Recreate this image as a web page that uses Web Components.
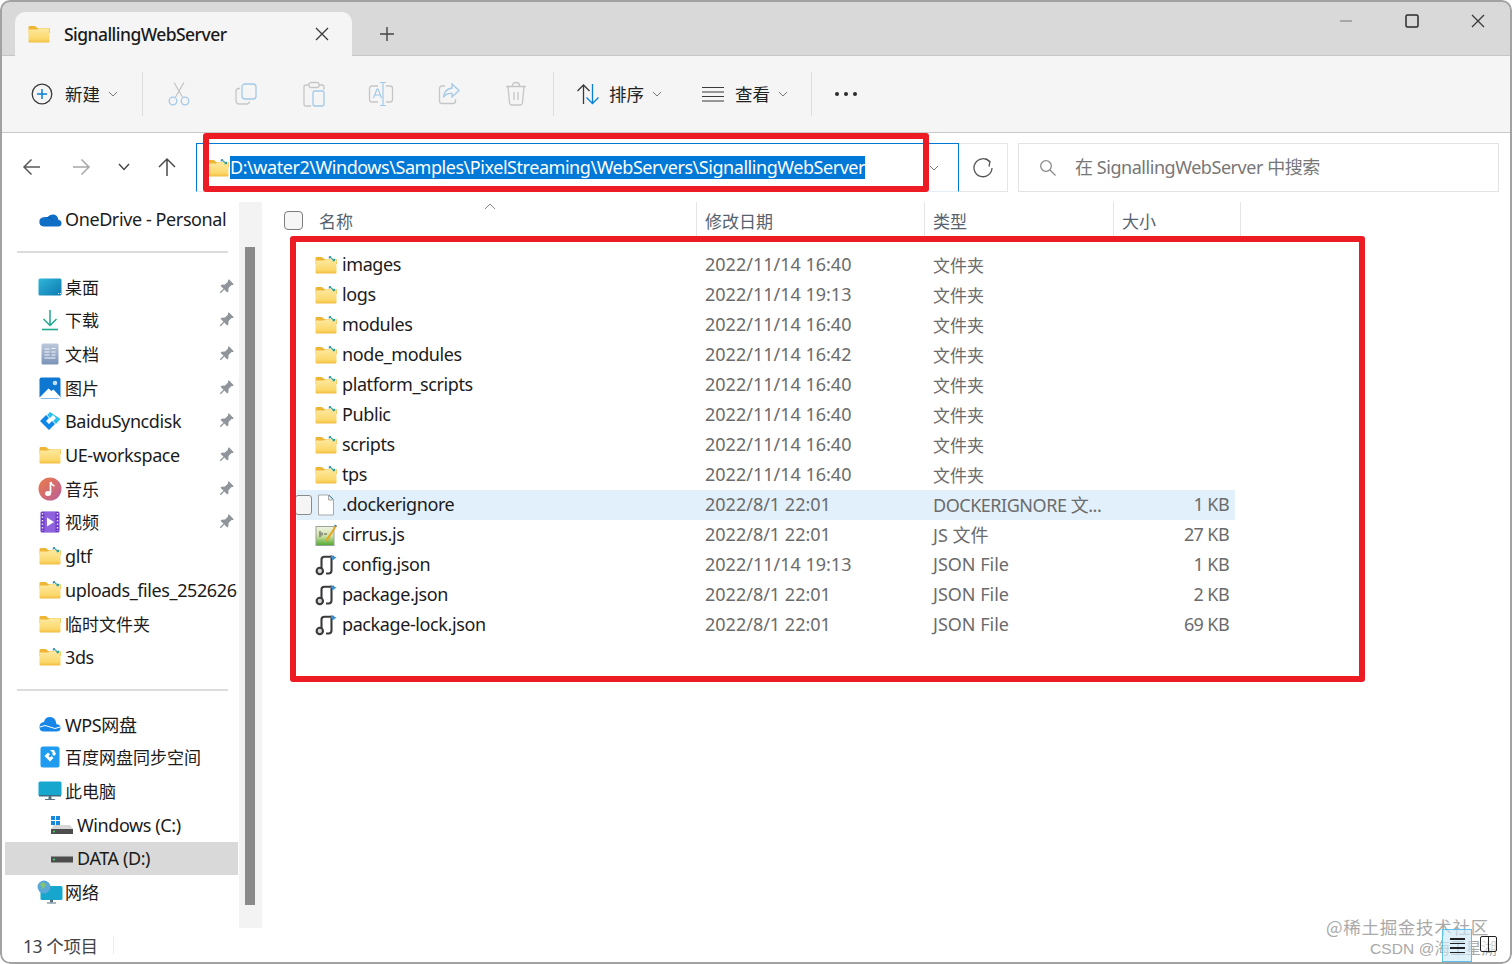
<!DOCTYPE html>
<html lang="zh-CN"><head><meta charset="utf-8"><title>SignallingWebServer</title>
<style>
html,body{margin:0;padding:0;background:#fff;width:1512px;height:964px;overflow:hidden}
body{font-family:"Noto Sans","Noto Sans CJK SC",sans-serif;font-size:18px;color:#1b1b1b;letter-spacing:-.4px}
</style></head><body>
<script>
const folderBase=(mark)=>`<svg viewBox="0 0 22 18" width="22" height="18"><defs><linearGradient id="f" x1="0" y1="0" x2="0" y2="1"><stop offset="0" stop-color="#fde9a0"/><stop offset=".75" stop-color="#fbd86c"/><stop offset="1" stop-color="#f2bc3c"/></linearGradient></defs><path d="M0.5 2.2q0-1.2 1.2-1.2h5.2l2.4 2h11.5q1.2 0 1.2 1.2V8H.5z" fill="#efb534"/><path d="M.5 4.4h8.3l2-1.2h9.7q1 0 1 1v12.4q0 1-1 1H1.5q-1 0-1-1z" fill="url(#f)"/>${mark?'<path d="M14.6.6l5 4.2M19.6 4.8l-.2-2M19.6 4.8l-2-.1" stroke="#1d9c9c" stroke-width="1.1" fill="none"/><path d="M16 .7l-1.8.1.1 1.8" stroke="#2b7fb0" stroke-width="1" fill="none"/>':''}</svg>`;
const jsonIcon=`<svg viewBox="0 0 22 22" width="22" height="22"><path d="M6.500 14V5.500Q6.500 2.800 9.500 2.800H19" fill="none" stroke="#3a3a3a" stroke-width="2.100"/><path d="M16.500 4v12.500q0 3-3 3h-2.500" fill="none" stroke="#3a3a3a" stroke-width="2.100"/><circle cx="4.800" cy="17" r="3.200" fill="#d8d8d8" stroke="#3a3a3a" stroke-width="2.100"/><path d="M15.500 1l6 2.400-4 3z" fill="#3a8fd0"/></svg>`;
const pin=`<svg viewBox="0 0 16 16" width="16" height="16"><g transform="rotate(45 8 8)" fill="#8f959b"><path d="M4.500 .5h7v1.300l-1 .8v4.300l2.300 2.600v1.500H3.200V9.500l2.300-2.600V2.600l-1-.8z"/><rect x="7.300" y="11" width="1.400" height="5"/></g></svg>`;
const I={
folder:folderBase(false),folderSync:folderBase(true),json:jsonIcon,pin,
file:`<svg viewBox="0 0 18 22" width="18" height="22"><path d="M1.500 1h10l5 5v15h-15z" fill="#fff" stroke="#a8a8a8"/><path d="M11.500 1v5h5z" fill="#e8e8e8" stroke="#a8a8a8"/><path d="M12 1l4 4" stroke="#3a8fd0"/></svg>`,
js:`<svg viewBox="0 0 22 22" width="22" height="22"><defs><linearGradient id="j" x1="0" y1="0" x2="0" y2="1"><stop offset="0" stop-color="#f0f4e4"/><stop offset=".5" stop-color="#cfe2a6"/><stop offset="1" stop-color="#4ea82c"/></linearGradient></defs><rect x="1" y="2.500" width="18" height="19" fill="url(#j)" stroke="#9ca39a"/><path d="M5 7v6M7 8.500v3M9 10h3" stroke="#555" stroke-width="1.100"/><path d="M20.500 1L11.500 14.500l-1 3 2.600-1.600L22 2z" fill="#e9a721"/><path d="M19.500 1l2 1.500" stroke="#2e7fc0" stroke-width="1.500"/></svg>`,
plus:`<svg viewBox="0 0 22 22" width="22" height="22"><circle cx="11" cy="11" r="9.800" fill="none" stroke="#3b3b3b" stroke-width="1.300"/><path d="M11 6v10M6 11h10" stroke="#0a7fd6" stroke-width="1.500"/></svg>`,
cut:`<svg viewBox="0 0 24 26" width="24" height="26"><path d="M7 1.500l8.500 14.500M17 1.500L8.500 16" stroke="#c2c2c2" stroke-width="1.200" fill="none"/><circle cx="6" cy="20" r="3.800" fill="none" stroke="#a3c9e8" stroke-width="1.300"/><circle cx="18" cy="20" r="3.800" fill="none" stroke="#a3c9e8" stroke-width="1.300"/></svg>`,
copy:`<svg viewBox="0 0 24 24" width="24" height="24"><rect x="8" y="2" width="14" height="15" rx="3" fill="none" stroke="#a3c9e8" stroke-width="1.300"/><path d="M6 6.500H4.500Q2 6.500 2 9v9.500Q2 22 5.500 22h7q3 0 3-2.500" fill="none" stroke="#c6c6c6" stroke-width="1.300"/></svg>`,
paste:`<svg viewBox="0 0 24 26" width="24" height="26"><path d="M7 4H4Q2 4 2 6v17q0 2 2 2h5M17 4h3q2 0 2 2v3" fill="none" stroke="#c6c6c6" stroke-width="1.300"/><rect x="7" y="1.500" width="10" height="5" rx="2" fill="none" stroke="#c6c6c6" stroke-width="1.300"/><rect x="11" y="10" width="11" height="15" rx="2" fill="none" stroke="#a3c9e8" stroke-width="1.300"/></svg>`,
rename:`<svg viewBox="0 0 26 26" width="26" height="26"><path d="M10 5H4Q1.500 5 1.500 7.500v11Q1.500 21 4 21h6M18 5h4q2.500 0 2.500 2.500v11q0 2.500-2.500 2.500h-4" fill="none" stroke="#c6c6c6" stroke-width="1.300"/><path d="M5.500 17L9 8h1l3.500 9M7 14h5.500" fill="none" stroke="#a3c9e8" stroke-width="1.200"/><path d="M12 1.500h6M12 24.500h6M15 1.500v23" fill="none" stroke="#a3c9e8" stroke-width="1.200"/></svg>`,
share:`<svg viewBox="0 0 24 24" width="24" height="24"><path d="M8 4H5Q2.500 4 2.500 6.500V19q0 2.500 2.500 2.500h11q2.500 0 2.500-2.500v-2" fill="none" stroke="#c6c6c6" stroke-width="1.300"/><path d="M15 2l7 6.500-7 6.500v-3.500q-6-.5-8.500 4 .5-8.500 8.500-9.500z" fill="none" stroke="#a3c9e8" stroke-width="1.300"/></svg>`,
trash:`<svg viewBox="0 0 24 26" width="24" height="26"><path d="M2 5.500h20M8.500 5q0-3.500 3.500-3.500t3.500 3.500" fill="none" stroke="#c6c6c6" stroke-width="1.300"/><path d="M4 5.500l1.500 16q.2 2.500 2.500 2.500h8q2.300 0 2.500-2.500l1.500-16M10 11v8M14 11v8" fill="none" stroke="#c6c6c6" stroke-width="1.300"/></svg>`,
sort:`<svg viewBox="0 0 24 22" width="24" height="22"><path d="M7.500 21V2M1.500 8l6-6 6 6" fill="none" stroke="#3b3b3b" stroke-width="1.300"/><path d="M16.500 1v19.500M10.500 14.500l6 6 6-6" fill="none" stroke="#0a7fd6" stroke-width="1.300"/></svg>`,
view:`<svg viewBox="0 0 24 16" width="24" height="16"><path d="M1 1.500h22M1 6h22M1 10.500h22M1 15h22" stroke="#3b3b3b" stroke-width="1.100"/></svg>`,
more:`<svg viewBox="0 0 24 6" width="24" height="6"><circle cx="3" cy="3" r="2" fill="#2b2b2b"/><circle cx="12" cy="3" r="2" fill="#2b2b2b"/><circle cx="21" cy="3" r="2" fill="#2b2b2b"/></svg>`,
chev:`<svg viewBox="0 0 10 6" width="10" height="6"><path d="M1 1l4 4 4-4" fill="none" stroke="#777" stroke-width="1"/></svg>`,
chevD:`<svg viewBox="0 0 12 8" width="12" height="8"><path d="M1 1l5 5.500 5-5.500" fill="none" stroke="#444" stroke-width="1.400"/></svg>`,
back:`<svg viewBox="0 0 20 18" width="20" height="18"><path d="M18 9H2M9.500 1.500L2 9l7.500 7.500" fill="none" stroke="#5a5a5a" stroke-width="1.500"/></svg>`,
fwd:`<svg viewBox="0 0 20 18" width="20" height="18"><path d="M2 9h16M10.500 1.500L18 9l-7.500 7.500" fill="none" stroke="#a8a8a8" stroke-width="1.500"/></svg>`,
up:`<svg viewBox="0 0 20 20" width="20" height="20"><path d="M10 19V2M2 10l8-8 8 8" fill="none" stroke="#4a4a4a" stroke-width="1.500"/></svg>`,
refresh:`<svg viewBox="0 0 22 22" width="22" height="22"><path d="M17.500 4.500A9 9 0 1 0 20 11" fill="none" stroke="#555" stroke-width="1.300"/><path d="M13.500 1.500l4.500 3-1 5" fill="none" stroke="#555" stroke-width="1.300"/></svg>`,
search:`<svg viewBox="0 0 18 18" width="18" height="18"><circle cx="7" cy="7" r="5.300" fill="none" stroke="#8a8a8a" stroke-width="1.300"/><path d="M11 11l5.500 5.500" stroke="#8a8a8a" stroke-width="1.300"/></svg>`,
close:`<svg viewBox="0 0 14 14" width="14" height="14"><path d="M1 1l12 12M13 1L1 13" stroke="#3a3a3a" stroke-width="1.300"/></svg>`,
add:`<svg viewBox="0 0 16 16" width="16" height="16"><path d="M8 1v14M1 8h14" stroke="#444" stroke-width="1.400"/></svg>`,
min:`<svg viewBox="0 0 14 14" width="14" height="14"><path d="M1 7h12" stroke="#777" stroke-width="1.200"/></svg>`,
max:`<svg viewBox="0 0 14 14" width="14" height="14"><rect x="1" y="1" width="12" height="12" rx="1.500" fill="none" stroke="#2a2a2a" stroke-width="1.500"/></svg>`,
caret:`<svg viewBox="0 0 12 7" width="12" height="7"><path d="M1 6l5-5 5 5" fill="none" stroke="#8a8a8a" stroke-width="1"/></svg>`,
onedrive:`<svg viewBox="0 0 24 16" width="24" height="16"><path d="M6 15.500h14q3.500 0 3.500-3.200 0-3-3-3.400Q19.500 3.500 14.500 3.500q-3 0-5 2.600Q3 5.500 1.500 9 .5 15.500 6 15.500z" fill="#0f6fc6"/><path d="M9 6.500q4-1 6 3" fill="none" stroke="#0a5aa8"/></svg>`,
desktop:`<svg viewBox="0 0 24 18" width="24" height="18"><defs><linearGradient id="d" x1="0" y1="0" x2="1" y2="1"><stop offset="0" stop-color="#2fb7da"/><stop offset="1" stop-color="#0d79b0"/></linearGradient></defs><rect x="0.500" y="0.500" width="23" height="17" rx="1.500" fill="url(#d)"/><path d="M20 15.500h3" stroke="#d9eef6" stroke-dasharray="1 1"/></svg>`,
download:`<svg viewBox="0 0 20 22" width="20" height="22"><path d="M10 1v15M3.500 10l6.500 6.500 6.500-6.500" fill="none" stroke="#1fa98c" stroke-width="1.500"/><path d="M2 20.500h16" stroke="#1fa98c" stroke-width="1.600"/></svg>`,
doc:`<svg viewBox="0 0 18 22" width="18" height="22"><defs><linearGradient id="o" x1="0" y1="0" x2="0" y2="1"><stop offset="0" stop-color="#bcc9dc"/><stop offset="1" stop-color="#7b93b8"/></linearGradient></defs><rect x="0.500" y="0.500" width="17" height="21" rx="1.500" fill="url(#o)"/><path d="M3.500 6h5M3.500 9h5M3.500 12h5M10.500 5.500h4M3.500 15h11M10.500 9h4M10.500 12h4" stroke="#f4f6fa" stroke-width="1.200"/></svg>`,
pictures:`<svg viewBox="0 0 22 22" width="22" height="22"><rect x="0.500" y="0.500" width="21" height="21" rx="2" fill="#0e77d1"/><path d="M1 20l8.500-8.500 3 2.500 2-1.500 6.500 7v1.500H1z" fill="#fff"/><circle cx="16" cy="6" r="2.300" fill="#bfe0fa"/></svg>`,
baidu:`<svg viewBox="0 0 22 20" width="22" height="20"><path d="M1 10l6-6 3 3-3 3 3 3 3-3 3 3-6 6z" fill="#0d86e8"/><path d="M11 1l-3 3 3 3 3-3 3 3-3 3 3 3 4.500-5z" fill="#29c0ee"/></svg>`,
music:`<svg viewBox="0 0 24 24" width="24" height="24"><defs><linearGradient id="m" x1="0" y1="0" x2="1" y2="1"><stop offset="0" stop-color="#ee7b45"/><stop offset="1" stop-color="#b95f9c"/></linearGradient></defs><circle cx="12" cy="12" r="11.500" fill="url(#m)"/><path d="M12.500 5v11" stroke="#fff" stroke-width="1.700"/><ellipse cx="10" cy="16.500" rx="3" ry="2.500" fill="#fff"/><path d="M12.500 5q1 3 4 4" fill="none" stroke="#fff" stroke-width="1.500"/></svg>`,
video:`<svg viewBox="0 0 20 22" width="20" height="22"><rect x="0.500" y="0.500" width="19" height="21" rx="1.500" fill="#6d3bc7"/><rect x="4.500" y="1" width="11" height="20" fill="#8e62de"/><path d="M7 6.500l7 4.500-7 4.500z" fill="#fff"/><path d="M2.500 2v18M17.500 2v18" stroke="#e5d9fa" stroke-width="1.500" stroke-dasharray="1.500 2"/></svg>`,
wps:`<svg viewBox="0 0 22 16" width="22" height="16"><path d="M5 15.500h12.500q4 0 4-3.500t-4-3.800Q16.500 1 11 1 6 1 5 6q-4.500.5-4.500 5 0 4.500 4.500 4.500z" fill="#1687e8"/><path d="M1 11q5-3 10 0t10 0" fill="none" stroke="#fff" stroke-width="1"/></svg>`,
baidu2:`<svg viewBox="0 0 20 22" width="20" height="22"><path d="M3 .500h14q2.500 0 2.500 2.500v16q0 2.500-2.500 2.500H3Q.5 21.500.5 19V3Q.5.500 3 .500z" fill="#1f9cf0"/><path d="M4.500 10l3.500-3.500 2 2-1.500 1.500 1.500 1.500 1.500-1.500 2 2-3.500 3.500zM10 4l4 0 2 4-2 2-2-2 1-1-1-1z" fill="#fff"/></svg>`,
pc:`<svg viewBox="0 0 24 20" width="24" height="20"><rect x="0.500" y="0.500" width="23" height="14.500" rx="1.500" fill="#17a6cd"/><path d="M1 14h22v1.500H1z" fill="#3c6c80"/><path d="M11 15.500h2v2.500h-2zM7 18.500h10" stroke="#55707e" fill="#55707e"/></svg>`,
win:`<svg viewBox="0 0 24 20" width="24" height="20"><path d="M1 14l3-4h16l3 4v5H1z" fill="#d7d7d7"/><rect x="1" y="14" width="22" height="5" fill="#4d4d4d"/><circle cx="4" cy="16.500" r="1" fill="#38e06a"/><path d="M1 1h4v4H1zM6 1h4v4H6zM1 6h4v4H1zM6 6h4v4H6z" fill="#1788dc"/></svg>`,
drive:`<svg viewBox="0 0 24 10" width="24" height="10"><path d="M1 3.500l2-3h18l2 3v6H1z" fill="#d7d7d7"/><rect x="1" y="3.500" width="22" height="6" fill="#4d4d4d"/><circle cx="4" cy="6.500" r="1" fill="#38e06a"/></svg>`,
net:`<svg viewBox="0 0 26 24" width="26" height="24"><rect x="3.500" y="6" width="22" height="14" rx="1.500" fill="#17a6cd"/><path d="M13.500 20h2v2h-2zM10 23h9" stroke="#55707e" fill="#55707e"/><circle cx="7" cy="7" r="6.500" fill="#5aa8d8"/><path d="M3 4q3-2 5-.5t0 3-2 3" fill="#84c46c"/></svg>`
};
const def=(n,css,html)=>customElements.define(n,class extends HTMLElement{connectedCallback(){if(this.shadowRoot)return;const s=this.attachShadow({mode:'open'});s.innerHTML=`<style>${css}</style>`+(typeof html==='function'?html(this):html);}});

def('fx-icon',':host{display:inline-flex;align-items:center;justify-content:center;flex:none}svg{display:block}',h=>I[h.getAttribute('name')]||'');

def('fx-titlebar',`:host{display:flex;height:56px;background:#d9d9d9;align-items:flex-end;flex:none;box-shadow:inset 0 -1px 0 #c6c6c6}
.tab{margin-left:15px;width:337px;height:44px;background:#f5f5f5;border-radius:10px 10px 0 0;display:flex;align-items:center;box-sizing:border-box;padding:0 23px 0 13px}
.t{margin-left:14px;flex:1;font-size:17.500px;font-weight:500;color:#1a1a1a;letter-spacing:-.55px;padding-bottom:1px}
.add{margin-left:27px;height:44px;display:flex;align-items:center}
.ctl{margin-left:auto;align-self:flex-start;display:flex;height:42px;align-items:center;padding-right:1px}
.ctl fx-icon{width:66px}`,
`<div class="tab"><fx-icon name="folder"></fx-icon><span class="t">SignallingWebServer</span><fx-icon name="close"></fx-icon></div><div class="add"><fx-icon name="add"></fx-icon></div><div class="ctl"><fx-icon name="min"></fx-icon><fx-icon name="max"></fx-icon><fx-icon name="close"></fx-icon></div>`);

def('fx-tool',`:host{display:flex;width:67.500px;height:44px;align-items:center;justify-content:center;flex:none}`,`<slot></slot>`);
def('fx-sep',`:host{display:block;width:1px;height:44px;background:#dedede;flex:none}`,``);
def('fx-toolbar',`:host{display:flex;height:77px;box-sizing:border-box;background:#f5f5f5;border-bottom:1.500px solid #c9c9c9;align-items:center;flex:none;padding-left:31px;font-size:17.500px;color:#222;letter-spacing:0}
.lb{margin-left:12px;padding-bottom:2px}.c{margin-left:8px}`,
`<fx-icon name="plus"></fx-icon><span class="lb">新建</span><fx-icon class="c" name="chev"></fx-icon>
<fx-sep style="margin-left:24px"></fx-sep><fx-tool style="margin-left:2px"><fx-icon name="cut"></fx-icon></fx-tool><fx-tool><fx-icon name="copy"></fx-icon></fx-tool><fx-tool><fx-icon name="paste"></fx-icon></fx-tool><fx-tool><fx-icon name="rename"></fx-icon></fx-tool><fx-tool><fx-icon name="share"></fx-icon></fx-tool><fx-tool><fx-icon name="trash"></fx-icon></fx-tool>
<fx-sep style="margin-left:3px"></fx-sep>
<fx-icon name="sort" style="margin-left:22px"></fx-icon><span class="lb" style="margin-left:9px">排序</span><fx-icon class="c" name="chev"></fx-icon>
<fx-icon name="view" style="margin-left:39px"></fx-icon><span class="lb" style="margin-left:10px">查看</span><fx-icon class="c" name="chev"></fx-icon>
<fx-sep style="margin-left:23px"></fx-sep><fx-icon name="more" style="margin-left:22px"></fx-icon>`);

def('fx-addressbar',`:host{display:flex;height:69px;box-sizing:border-box;padding:10px 0 0 22px;background:#fff;flex:none;align-items:flex-start}
.n{height:48px;display:flex;align-items:center;justify-content:center}
.addr{margin-left:19px;width:763px;height:49px;box-sizing:border-box;border:1px solid #0078d4;border-bottom-color:#e3eef7;display:flex;align-items:center;padding:0 19px 0 10px}
.sel{background:#0078d7;color:#fff;font-size:18px;height:23px;line-height:23px;margin-left:1px;white-space:nowrap;letter-spacing:-.45px}
.ref{width:49px;height:49px;box-sizing:border-box;border:1px solid #e6e6e6;border-left:0;display:flex;align-items:center;justify-content:center}
.srch{margin-left:10px;width:481px;height:49px;box-sizing:border-box;border:1px solid #e3e3e3;display:flex;align-items:center;padding-left:20px;color:#777;font-size:18px;letter-spacing:-.45px}
.srch span{margin-left:18px;padding-bottom:3px}`,
`<div class="n" style="width:20px"><fx-icon name="back"></fx-icon></div><div class="n" style="width:20px;margin-left:29px"><fx-icon name="fwd"></fx-icon></div><div class="n" style="width:12px;margin-left:27px"><fx-icon name="chevD"></fx-icon></div><div class="n" style="width:20px;margin-left:27px"><fx-icon name="up"></fx-icon></div>
<div class="addr"><fx-icon name="folderSync"></fx-icon><span class="sel">D:\\water2\\Windows\\Samples\\PixelStreaming\\WebServers\\SignallingWebServer</span><fx-icon name="chev" style="margin-left:auto"></fx-icon></div>
<div class="ref"><fx-icon name="refresh"></fx-icon></div>
<div class="srch"><fx-icon name="search"></fx-icon><span>在 SignallingWebServer 中搜索</span></div>`);

def('fx-nav-item',`:host{display:flex;height:33.700px;align-items:center;box-sizing:border-box;padding-left:var(--pl,33px);margin-right:1px;white-space:nowrap;color:#1b1b1b}
:host([active]){background:#d9d9d9}
.i{width:23px;display:flex;justify-content:center;flex:none}
.l{margin-left:4px;flex:1}
.l.z{font-size:17px;letter-spacing:0;padding-bottom:1px}
.p{margin-right:4px}
:host([sub]){--pl:45px}`,
h=>`<div class="i"><fx-icon name="${h.getAttribute('icon')}"></fx-icon></div><span class="l${/^[^\x00-\x7f]+$/.test(h.textContent)?' z':''}"><slot></slot></span>${h.hasAttribute('pin')?'<fx-icon class="p" name="pin"></fx-icon>':''}`);

def('fx-sidebar',`:host{display:flex;width:262px;flex:none;height:100%}
.nav{width:239px;box-sizing:border-box;padding:0 0 0 5px;flex:none}
hr{border:0;height:2px;background:#dcdcdc;margin:15.300px 11px 16.800px 12px}
hr.b{margin-top:15.400px;margin-bottom:15.400px}
.track{width:23px;background:#f3f3f3;height:726px;box-sizing:border-box;padding:45px 7px 0 6px;flex:none}
.thumb{height:658px;background:#8a8a8a}`,
`<div class="nav">
<fx-nav-item icon="onedrive">OneDrive - Personal</fx-nav-item><hr>
<fx-nav-item icon="desktop" pin>桌面</fx-nav-item><fx-nav-item icon="download" pin>下载</fx-nav-item><fx-nav-item icon="doc" pin>文档</fx-nav-item><fx-nav-item icon="pictures" pin>图片</fx-nav-item><fx-nav-item icon="baidu" pin>BaiduSyncdisk</fx-nav-item><fx-nav-item icon="folder" pin>UE-workspace</fx-nav-item><fx-nav-item icon="music" pin>音乐</fx-nav-item><fx-nav-item icon="video" pin>视频</fx-nav-item><fx-nav-item icon="folderSync">gltf</fx-nav-item><fx-nav-item icon="folderSync">uploads_files_252626</fx-nav-item><fx-nav-item icon="folder">临时文件夹</fx-nav-item><fx-nav-item icon="folderSync">3ds</fx-nav-item><hr class="b">
<fx-nav-item icon="wps">WPS网盘</fx-nav-item><fx-nav-item icon="baidu2">百度网盘同步空间</fx-nav-item><fx-nav-item icon="pc">此电脑</fx-nav-item><fx-nav-item icon="win" sub>Windows (C:)</fx-nav-item><fx-nav-item icon="drive" sub active>DATA (D:)</fx-nav-item><fx-nav-item icon="net">网络</fx-nav-item>
</div><div class="track"><div class="thumb"></div></div>`);

def('fx-header',`:host{display:grid;grid-template-columns:434px 228px 189px 127px;height:48px;box-sizing:border-box;padding-bottom:14px;color:#56636f;font-size:17px;letter-spacing:0;position:relative}
div{display:flex;align-items:center;padding-left:9px;border-right:1px solid #e5e5e5;margin-right:-1px;padding-top:2px}
div:first-of-type{padding-left:22px}
.cb{width:19px;height:19px;box-sizing:border-box;border:1.500px solid #7c7c7c;border-radius:4px;background:#f6f6f6;flex:none}
.n{margin-left:16px}
.sort{position:absolute;left:222px;top:1px;padding:0;border:0;margin:0}`,
`<div><span class="cb"></span><span class="n">名称</span></div><div>修改日期</div><div>类型</div><div>大小</div><div class="sort"><fx-icon name="caret"></fx-icon></div>`);

def('fx-row',`:host{display:grid;grid-template-columns:399px 228px 189px 122px;height:30px;margin-left:35px;width:938px;align-items:center;color:#6b6b6b;white-space:nowrap;position:relative}
:host([hot]){background:#e2f0fb}
.name{display:flex;align-items:center;padding-left:18px;color:#1b1b1b}
.ic{width:22px;display:flex;justify-content:center;flex:none}
.name span{margin-left:5px;padding-bottom:2px}
.d{padding-left:9px;letter-spacing:0;padding-bottom:2px}
.d.y{font-size:17px}
.d.w{letter-spacing:-.47px}
.s{text-align:right;padding-right:6px;letter-spacing:-.6px;padding-bottom:2px}
.cb{position:absolute;left:-2px;top:5px;width:17px;height:20px;box-sizing:border-box;border:1.200px solid #8a8a8a;border-radius:3px;background:#f5f5f5}`,
h=>{const t=h.getAttribute('t');return `${h.hasAttribute('hot')?'<i class="cb"></i>':''}<div class="name"><div class="ic"><fx-icon name="${h.getAttribute('icon')}"></fx-icon></div><span>${h.getAttribute('n')}</span></div><div class="d">${h.getAttribute('d')}</div><div class="d${t==='文件夹'?' y':''}${t.startsWith('DOCKER')?' w':''}">${t}</div><div class="s">${h.getAttribute('s')||''}</div>`});

def('fx-status',`:host{display:flex;height:34px;flex:none;align-items:center;padding-left:23px;color:#444;background:#fff;font-size:17.500px;box-sizing:border-box;padding-bottom:4px}
i{display:block;width:1px;height:18px;background:#ececec;margin-left:15px}`,`<slot></slot><i></i>`);

def('fx-annotation',`:host{position:absolute;box-sizing:border-box;border:6px solid #ed1c24;border-radius:3px;z-index:5;pointer-events:none}`,``);

def('fx-watermark',`:host{position:absolute;right:0;bottom:0;width:220px;height:50px;z-index:6;pointer-events:none;font-family:"Liberation Sans","Noto Sans CJK SC",sans-serif;color:#a9a9a9;white-space:nowrap;letter-spacing:0}
.a{position:absolute;left:34px;top:0;font-size:17.500px;letter-spacing:.7px;font-family:"Noto Sans CJK SC",sans-serif}
.b{position:absolute;left:78px;top:22px;font-size:15.500px;letter-spacing:.1px}
.v1{position:absolute;left:150px;top:15px;width:30px;height:33px;box-sizing:border-box;border:1.500px solid #5cc0e8;background:rgba(205,232,248,.65);display:flex;flex-direction:column;gap:3px;justify-content:center;align-items:center}
.v1 u{display:block;width:15px;height:1.500px;background:#222}
.v2{position:absolute;left:188px;top:22px;width:17px;height:16px;box-sizing:border-box;border:1.500px solid #222;border-radius:2px;background:linear-gradient(90deg,transparent 45%,#222 45%,#222 55%,transparent 55%),linear-gradient(0deg,rgba(255,255,255,.5),rgba(255,255,255,.5))}`,
`<span class="a">@稀土掘金技术社区</span><span class="b">CSDN @海王星湖</span><div class="v1"><u></u><u></u><u></u><u></u></div><div class="v2"></div>`);

def('fx-window',`:host{display:flex;flex-direction:column;width:1512px;height:964px;border-radius:10px;overflow:hidden;position:relative;background:#fff}
:host::after{content:"";position:absolute;inset:0;border:2px solid #a2a2a2;border-radius:10px;pointer-events:none;z-index:4}
.main{display:flex;height:728px;flex:none}
.files{flex:1;min-width:0}`,
`<fx-titlebar></fx-titlebar><fx-toolbar></fx-toolbar><fx-addressbar></fx-addressbar>
<div class="main"><fx-sidebar></fx-sidebar><div class="files"><slot></slot></div></div>
<fx-status>13 个项目</fx-status>
<fx-annotation style="left:203px;top:133px;width:726px;height:59px"></fx-annotation>
<fx-annotation style="left:290px;top:236px;width:1075px;height:446px"></fx-annotation>
<fx-watermark></fx-watermark>`);
</script>
<fx-window>
<fx-header></fx-header>
<fx-row icon="folderSync" n="images" d="2022/11/14 16:40" t="文件夹"></fx-row>
<fx-row icon="folderSync" n="logs" d="2022/11/14 19:13" t="文件夹"></fx-row>
<fx-row icon="folderSync" n="modules" d="2022/11/14 16:40" t="文件夹"></fx-row>
<fx-row icon="folderSync" n="node_modules" d="2022/11/14 16:42" t="文件夹"></fx-row>
<fx-row icon="folderSync" n="platform_scripts" d="2022/11/14 16:40" t="文件夹"></fx-row>
<fx-row icon="folderSync" n="Public" d="2022/11/14 16:40" t="文件夹"></fx-row>
<fx-row icon="folderSync" n="scripts" d="2022/11/14 16:40" t="文件夹"></fx-row>
<fx-row icon="folderSync" n="tps" d="2022/11/14 16:40" t="文件夹"></fx-row>
<fx-row hot icon="file" n=".dockerignore" d="2022/8/1 22:01" t="DOCKERIGNORE 文..." s="1 KB"></fx-row>
<fx-row icon="js" n="cirrus.js" d="2022/8/1 22:01" t="JS 文件" s="27 KB"></fx-row>
<fx-row icon="json" n="config.json" d="2022/11/14 19:13" t="JSON File" s="1 KB"></fx-row>
<fx-row icon="json" n="package.json" d="2022/8/1 22:01" t="JSON File" s="2 KB"></fx-row>
<fx-row icon="json" n="package-lock.json" d="2022/8/1 22:01" t="JSON File" s="69 KB"></fx-row>
</fx-window>
</body></html>
